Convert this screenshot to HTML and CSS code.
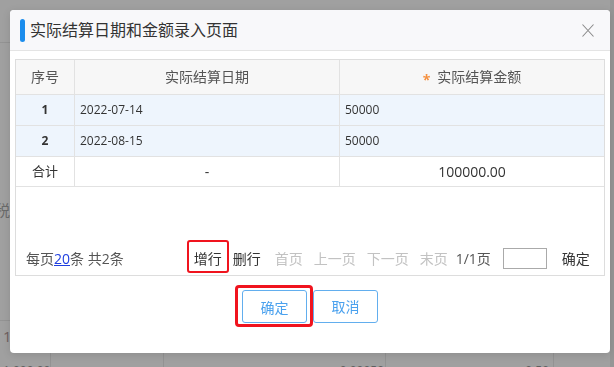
FILE: index.html
```html
<!DOCTYPE html>
<html lang="zh-CN">
<head>
    <meta charset="UTF-8">
    <meta name="viewport" content="width=device-width, initial-scale=1.0">
    <title>实际结算日期和金额录入页面</title>
    <link rel="stylesheet" href="styles.css">
</head>
<body>
    <!-- page behind the mask -->
    <div class="page">
        <div class="bg-top"></div>
        <div class="bg-mid">税</div>
        <div class="bg-row">1</div>
        <div class="bg-foot">
            <div class="bg-cell c1">1,000.00</div>
            <div class="bg-cell c2"></div>
            <div class="bg-cell c3">0.00050</div>
            <div class="bg-cell c4">0.50</div>
            <div class="bg-cell c5"></div>
        </div>
    </div>

    <div class="dialog">
        <div class="dlg-head">
            <span class="bar"></span>
            <span class="dlg-title">实际结算日期和金额录入页面</span>
            <span class="close">
                <svg width="12" height="13" viewBox="0 0 12 13">
                    <path d="M0.5 0.5 L11.5 12.5 M11.5 0.5 L0.5 12.5" stroke="#8a8a8a" stroke-width="1.1" fill="none"/>
                </svg>
            </span>
        </div>
        <div class="dlg-body">
            <div class="grid-box">
                <table class="grid">
                    <colgroup>
                        <col class="col-no">
                        <col class="col-date">
                        <col>
                    </colgroup>
                    <thead>
                        <tr>
                            <th>序号</th>
                            <th>实际结算日期</th>
                            <th><span class="req">*</span>实际结算金额</th>
                        </tr>
                    </thead>
                    <tbody>
                        <tr class="data">
                            <td class="no">1</td>
                            <td>2022-07-14</td>
                            <td>50000</td>
                        </tr>
                        <tr class="data">
                            <td class="no">2</td>
                            <td>2022-08-15</td>
                            <td>50000</td>
                        </tr>
                        <tr class="total">
                            <td class="label">合计</td>
                            <td>-</td>
                            <td>100000.00</td>
                        </tr>
                    </tbody>
                </table>
                <div class="pager">
                    <span class="info">每页<a class="size" href="#">20</a>条 共2条</span>
                    <span class="mark act add">增行</span>
                    <span class="act del">删行</span>
                    <span class="off first">首页</span>
                    <span class="off">上一页</span>
                    <span class="off">下一页</span>
                    <span class="off">末页</span>
                    <span class="count">1/1页</span>
                    <input class="jump" type="text">
                    <span class="act go">确定</span>
                </div>
            </div>
            <div class="dlg-foot">
                <span class="mark-btn"><button class="btn">确定</button></span>
                <button class="btn">取消</button>
            </div>
        </div>
    </div>
</body>
</html>
```

FILE: styles.css
```css
body {
    margin: 0;
    height: 367px;
    overflow: hidden;
    background: #a0a0a0;
    font-family: "Open Sans", "Noto Sans CJK SC", sans-serif;
}

/* dimmed page */
.page {
    height: 367px;
    box-sizing: border-box;
    overflow: hidden;
    border-right: 4px solid #969696;
    color: #5f5f5f;
}
.bg-top {
    height: 42px;
    border-bottom: 1px solid #939393;
}
.bg-mid {
    height: 277px;
    box-sizing: border-box;
    padding-top: 157px;
    font-size: 15px;
    line-height: 20px;
    text-indent: -5px;
    color: #6a6a6a;
}
.bg-row {
    height: 31px;
    border-top: 1px solid #939393;
    padding-left: 3px;
    font-size: 15px;
    line-height: 31px;
    color: #6f5f5f;
}
.bg-foot {
    display: flex;
    height: 15px;
    overflow: hidden;
    font-size: 12px;
}
.bg-cell {
    box-sizing: border-box;
    padding-top: 9px;
    line-height: 20px;
    border-left: 1px solid #939393;
    text-align: right;
}
.bg-cell.c1 { width: 50px; border-left: none; text-align: left; padding-left: 3px; }
.bg-cell.c2 { width: 113px; }
.bg-cell.c3 { width: 222px; padding-right: 1px; }
.bg-cell.c4 { width: 168px; padding-right: 4px; }
.bg-cell.c5 { flex: 1; }

/* dialog */
.dialog {
    position: fixed;
    top: 10px;
    left: 10px;
    width: 600px;
    height: 343px;
    background: #fff;
    border-radius: 4px;
    box-shadow: 0 2px 8px rgba(0, 0, 0, 0.12);
    display: flex;
    flex-direction: column;
}
.dlg-head {
    display: flex;
    align-items: center;
    height: 40px;
    padding-left: 10px;
    background: #f8f8fa;
    border-bottom: 1px solid #e4e4e4;
    border-radius: 4px 4px 0 0;
}
.bar {
    width: 5px;
    height: 23px;
    border-radius: 3px;
    background: #1b8ded;
    margin-right: 5px;
}
.dlg-title {
    font-size: 16px;
    line-height: 23px;
    color: #333;
}
.close {
    margin-left: auto;
    margin-right: 16px;
    display: flex;
}
.dlg-body {
    padding: 8px 5px 0;
}
.grid-box {
    height: 217px;
    box-sizing: border-box;
    border: 1px solid #dddddd;
    display: flex;
    flex-direction: column;
}
.grid {
    width: 100%;
    border-spacing: 0;
    table-layout: fixed;
}
.col-no { width: 58px; }
.col-date { width: 265px; }
.grid th {
    padding: 0;
    font-size: 14px;
    font-weight: normal;
    line-height: 34px;
    color: #555;
    background: #f7f7f7;
    border-bottom: 1px solid #e2e2e2;
    border-left: 1px solid #e2e2e2;
}
.grid th:first-child,
.grid td:first-child {
    border-left: none;
}
.req {
    color: #f59140;
    font-weight: bold;
    margin-right: 7px;
    position: relative;
    top: 3px;
}
.grid td {
    padding: 0 5px;
    font-size: 12px;
    line-height: 30px;
    color: #333;
    border-bottom: 1px solid #e2e2e2;
    border-left: 1px solid #e2e2e2;
}
.grid tr.data td {
    background: #eef5fd;
}
.grid td.no {
    text-align: center;
    font-weight: bold;
}
.grid tr.total td {
    line-height: 29px;
    text-align: center;
    font-size: 14px;
}
.grid tr.total td.label {
    font-size: 13px;
}

.pager {
    margin-top: auto;
    margin-bottom: 2px;
    padding-left: 10px;
    display: flex;
    align-items: baseline;
    font-size: 14px;
    line-height: 20px;
    color: #555;
}
.size {
    color: #1f3fe0;
}
.act { color: #333; }
.off { color: #c2c2c2; margin-left: 11px; }
.mark {
    margin-left: 63px;
    padding: 7px 5px 2px;
    border: 2px solid #f0141e;
    border-radius: 3px;
}
.del { margin-left: 4px; }
.off.first { margin-left: 14px; }
.count { margin-left: 8px; }
.jump {
    margin-left: 12px;
    width: 44px;
    height: 21px;
    box-sizing: border-box;
    border: 1px solid #aaa;
    padding: 0;
    align-self: center;
    position: relative;
    top: 2px;
}
.go { margin-left: 15px; }

.dlg-foot {
    padding: 9px 7px 0 0;
    display: flex;
    justify-content: center;
    align-items: center;
}
.mark-btn {
    display: flex;
    padding: 2px 3px 1px 4px;
    border: 3px solid #f0141e;
    border-radius: 4px;
}
.btn {
    width: 65px;
    height: 33px;
    padding: 0;
    background: #fff;
    border: 1px solid #62aeee;
    border-radius: 3px;
    color: #4aa1ee;
    font-family: "Open Sans", "Noto Sans CJK SC", sans-serif;
    font-size: 14px;
}
```
